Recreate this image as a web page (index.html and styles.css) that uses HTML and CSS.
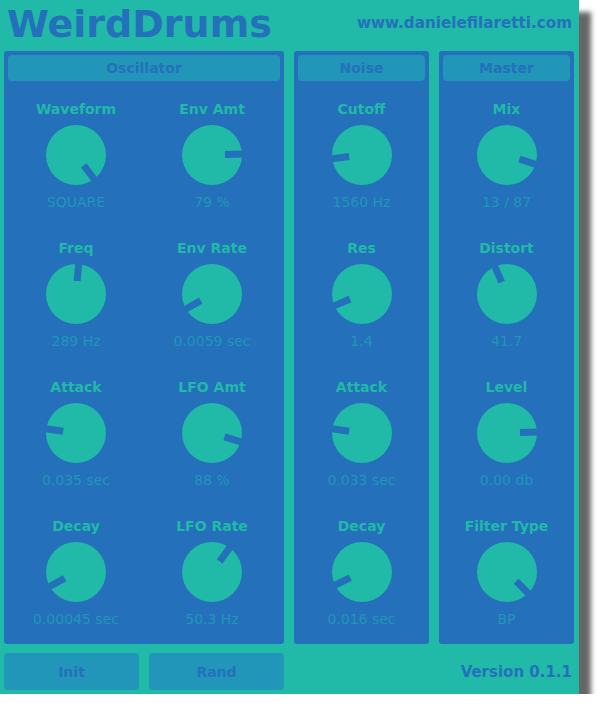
FILE: index.html
```html
<!DOCTYPE html>
<html>
<head>
<meta charset="utf-8">
<link rel="stylesheet" href="styles.css">
</head>
<body>
<div class="app">
  <div class="top">
    <div class="title">WeirdDrums</div>
    <div class="url">www.danielefilaretti.com</div>
  </div>
  <div class="panels">
    <section class="panel osc">
      <div class="phead">Oscillator</div>
      <div class="grid two">
        <div class="cell"><div class="lbl">Waveform</div><svg class="knob" viewBox="0 0 60 60"><circle cx="30" cy="30" r="30"/><rect x="26.5" y="-1" width="7" height="18" transform="rotate(143 30 30)"/></svg><div class="val">SQUARE</div></div>
        <div class="cell"><div class="lbl">Env Amt</div><svg class="knob" viewBox="0 0 60 60"><circle cx="30" cy="30" r="30"/><rect x="26.5" y="-1" width="7" height="18" transform="rotate(88 30 30)"/></svg><div class="val">79 %</div></div>
        <div class="cell"><div class="lbl">Freq</div><svg class="knob" viewBox="0 0 60 60"><circle cx="30" cy="30" r="30"/><rect x="26.5" y="-1" width="7" height="18" transform="rotate(5 30 30)"/></svg><div class="val">289 Hz</div></div>
        <div class="cell"><div class="lbl">Env Rate</div><svg class="knob" viewBox="0 0 60 60"><circle cx="30" cy="30" r="30"/><rect x="26.5" y="-1" width="7" height="18" transform="rotate(-120 30 30)"/></svg><div class="val">0.0059 sec</div></div>
        <div class="cell"><div class="lbl">Attack</div><svg class="knob" viewBox="0 0 60 60"><circle cx="30" cy="30" r="30"/><rect x="26.5" y="-1" width="7" height="18" transform="rotate(-82 30 30)"/></svg><div class="val">0.035 sec</div></div>
        <div class="cell"><div class="lbl">LFO Amt</div><svg class="knob" viewBox="0 0 60 60"><circle cx="30" cy="30" r="30"/><rect x="26.5" y="-1" width="7" height="18" transform="rotate(107 30 30)"/></svg><div class="val">88 %</div></div>
        <div class="cell"><div class="lbl">Decay</div><svg class="knob" viewBox="0 0 60 60"><circle cx="30" cy="30" r="30"/><rect x="26.5" y="-1" width="7" height="18" transform="rotate(-119 30 30)"/></svg><div class="val">0.00045 sec</div></div>
        <div class="cell"><div class="lbl">LFO Rate</div><svg class="knob" viewBox="0 0 60 60"><circle cx="30" cy="30" r="30"/><rect x="26.5" y="-1" width="7" height="18" transform="rotate(36 30 30)"/></svg><div class="val">50.3 Hz</div></div>
      </div>
    </section>
    <section class="panel side">
      <div class="phead">Noise</div>
      <div class="grid">
        <div class="cell"><div class="lbl">Cutoff</div><svg class="knob" viewBox="0 0 60 60"><circle cx="30" cy="30" r="30"/><rect x="26.5" y="-1" width="7" height="18" transform="rotate(-97 30 30)"/></svg><div class="val">1560 Hz</div></div>
        <div class="cell"><div class="lbl">Res</div><svg class="knob" viewBox="0 0 60 60"><circle cx="30" cy="30" r="30"/><rect x="26.5" y="-1" width="7" height="18" transform="rotate(-113 30 30)"/></svg><div class="val">1.4</div></div>
        <div class="cell"><div class="lbl">Attack</div><svg class="knob" viewBox="0 0 60 60"><circle cx="30" cy="30" r="30"/><rect x="26.5" y="-1" width="7" height="18" transform="rotate(-82 30 30)"/></svg><div class="val">0.033 sec</div></div>
        <div class="cell"><div class="lbl">Decay</div><svg class="knob" viewBox="0 0 60 60"><circle cx="30" cy="30" r="30"/><rect x="26.5" y="-1" width="7" height="18" transform="rotate(-116 30 30)"/></svg><div class="val">0.016 sec</div></div>
      </div>
    </section>
    <section class="panel side">
      <div class="phead">Master</div>
      <div class="grid">
        <div class="cell"><div class="lbl">Mix</div><svg class="knob" viewBox="0 0 60 60"><circle cx="30" cy="30" r="30"/><rect x="26.5" y="-1" width="7" height="18" transform="rotate(108 30 30)"/></svg><div class="val">13 / 87</div></div>
        <div class="cell"><div class="lbl">Distort</div><svg class="knob" viewBox="0 0 60 60"><circle cx="30" cy="30" r="30"/><rect x="26.5" y="-1" width="7" height="18" transform="rotate(-24 30 30)"/></svg><div class="val">41.7</div></div>
        <div class="cell"><div class="lbl">Level</div><svg class="knob" viewBox="0 0 60 60"><circle cx="30" cy="30" r="30"/><rect x="26.5" y="-1" width="7" height="18" transform="rotate(88 30 30)"/></svg><div class="val">0.00 db</div></div>
        <div class="cell"><div class="lbl">Filter Type</div><svg class="knob" viewBox="0 0 60 60"><circle cx="30" cy="30" r="30"/><rect x="26.5" y="-1" width="7" height="18" transform="rotate(135 30 30)"/></svg><div class="val">BP</div></div>
      </div>
    </section>
  </div>
  <div class="foot">
    <button class="btn">Init</button>
    <button class="btn">Rand</button>
    <div class="version">Version 0.1.1</div>
  </div>
</div>
</body>
</html>
```

FILE: styles.css
```css
html, body {
  margin: 0;
  padding: 0;
  background: #ffffff;
}
body {
  font-family: "DejaVu Sans", Verdana, sans-serif;
}
.app {
  width: 579px;
  height: 694px;
  background: #21b9a7;
  box-shadow: 12px 12px 5px #666666;
  box-sizing: border-box;
  display: flex;
  flex-direction: column;
}
.top {
  height: 51px;
  display: flex;
  justify-content: space-between;
  align-items: flex-start;
  padding: 2px 7px 0 7px;
  box-sizing: border-box;
}
.title {
  font-weight: bold;
  font-size: 38px;
  line-height: 44px;
  color: #2470bb;
}
.url {
  font-weight: bold;
  font-size: 15.2px;
  line-height: 18px;
  color: #2470bb;
  margin-top: 12px;
}
.panels {
  display: flex;
  gap: 10px;
  padding-left: 4px;
  height: 593px;
}
.panel {
  background: #2470bb;
  border-radius: 3px;
  padding: 4px;
  box-sizing: border-box;
}
.osc { width: 280px; }
.side { width: 135px; }
.phead {
  height: 26px;
  background: #2196b8;
  border-radius: 4px;
  color: #2470bb;
  font-weight: bold;
  font-size: 14px;
  line-height: 27px;
  text-align: center;
}
.grid {
  display: grid;
  grid-template-columns: 1fr;
  row-gap: 30px;
  padding-top: 20px;
}
.grid.two {
  grid-template-columns: 1fr 1fr;
}
.cell {
  display: flex;
  flex-direction: column;
  align-items: center;
}
.lbl {
  font-weight: bold;
  font-size: 14px;
  line-height: 17px;
  color: #21b9a7;
  height: 17px;
  white-space: nowrap;
}
.knob {
  width: 60px;
  height: 60px;
  margin-top: 7px;
  display: block;
}
.knob circle { fill: #21b9a7; }
.knob rect { fill: #2470bb; }
.val {
  font-size: 14px;
  line-height: 16px;
  height: 16px;
  margin-top: 9px;
  color: #2196b8;
  white-space: nowrap;
}
.foot {
  display: flex;
  align-items: flex-start;
  gap: 10px;
  padding: 9px 7px 0 4px;
}
.btn {
  width: 135px;
  height: 37px;
  border: none;
  border-radius: 4px;
  background: #2196b8;
  color: #2470bb;
  font-family: "DejaVu Sans", Verdana, sans-serif;
  font-weight: bold;
  font-size: 14px;
  padding: 0;
}
.version {
  margin-left: auto;
  font-weight: bold;
  font-size: 15px;
  line-height: 17px;
  color: #2470bb;
  margin-top: 11px;
}
```
